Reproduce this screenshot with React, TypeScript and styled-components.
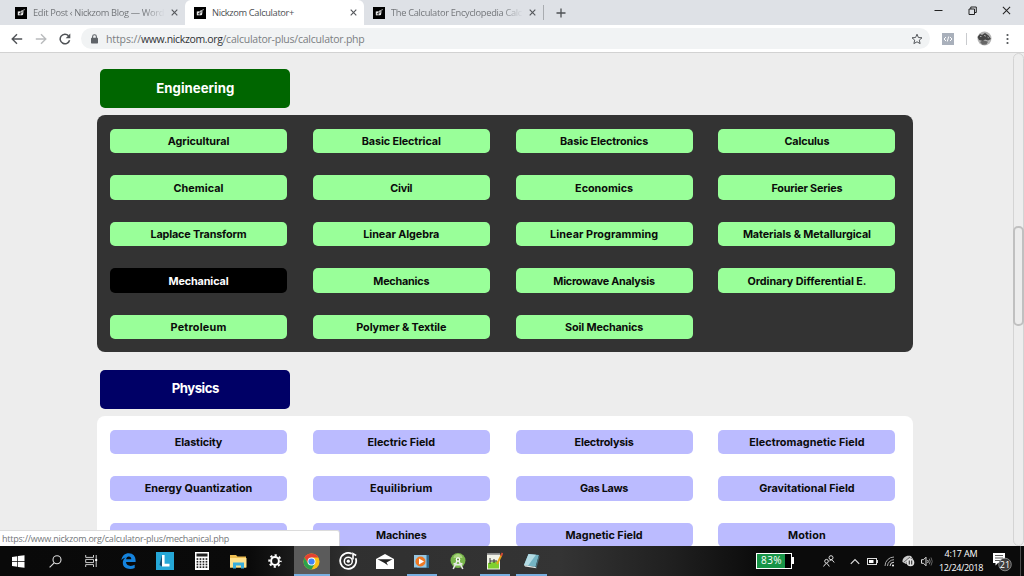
import React, { useLayoutEffect, useRef, useState } from "react";
import styled, { createGlobalStyle, css } from "styled-components";

const GlobalStyle = createGlobalStyle`
  * { box-sizing: border-box; }
  body { margin: 0; overflow: hidden; }
  svg { display: block; flex: none; }
`;

const ui = `"Open Sans", "Noto Sans", sans-serif`;
const geometric = `Inter, "Open Sans", sans-serif`;

/* Text */
const Line = styled.span`
  display: inline-block;
  white-space: nowrap;
`;

/** One line of text whose tracking is adjusted so that it fills a given width. */
function Tracked({ width, children }: { width: number; children: string }) {
  const ref = useRef<HTMLSpanElement>(null);
  const [spacing, setSpacing] = useState(0);
  useLayoutEffect(() => {
    const el = ref.current!;
    el.style.letterSpacing = "0px";
    const natural = el.getBoundingClientRect().width;
    const next = (width - natural) / children.length;
    el.style.letterSpacing = `${next}px`;
    setSpacing(next);
  }, [width, children]);
  return <Line ref={ref} style={{ letterSpacing: spacing }}>{children}</Line>;
}

/* Browser frame */
const Screen = styled.div`
  position: relative;
  width: 1024px;
  height: 576px;
  display: flex;
  flex-direction: column;
  overflow: hidden;
  font-family: ${ui};
  background: #ededed;
`;

const TabStrip = styled.div`
  height: 25px;
  flex: none;
  display: flex;
  padding-left: 6px;
  background: #dee1e6;
`;

const Tab = styled.div<{ $active?: boolean; $width: number }>`
  width: ${(p) => p.$width}px;
  height: 25px;
  padding: 0 7px 0 9px;
  display: flex;
  align-items: center;
  gap: 6px;
  font-size: 9.3px;
  color: ${(p) => (p.$active ? "#4c4f53" : "#73767a")};
  ${(p) =>
    p.$active &&
    css`
      background: #fff;
      border-radius: 6px 6px 0 0;
    `}
`;

const TabTitle = styled.div<{ $fade?: boolean }>`
  flex: 1;
  min-width: 0;
  white-space: nowrap;
  line-height: 16px;
  ${(p) => p.$fade && css`mask-image: linear-gradient(90deg, #000 84%, transparent 100%);`}
`;

const TabDivider = styled.div`
  width: 1px;
  height: 15px;
  margin: 5px 12px 0 0;
  background: #a9acb0;
`;

const NewTab = styled.div`
  display: flex;
  align-items: center;
`;

const WindowControls = styled.div`
  margin-left: auto;
  padding: 0 13px 4px 0;
  display: flex;
  align-items: center;
  gap: 25px;
`;

const Toolbar = styled.div`
  height: 28px;
  flex: none;
  display: flex;
  align-items: center;
  padding: 0 12px 0 11px;
  background: #fff;
  border-bottom: 1px solid #d2d2d2;
`;

const NavButtons = styled.div`
  width: 70px;
  display: flex;
  gap: 12px;
`;

const AddressBar = styled.div`
  width: 849px;
  height: 21px;
  padding: 0 7px 0 9px;
  display: flex;
  align-items: center;
  gap: 7px;
  border-radius: 11px;
  background: #f1f3f4;
  color: #7b7e82;
  font-size: 10.5px;
`;

const Address = styled.div`
  flex: 1;
  line-height: 18px;
`;

const Host = styled.span`
  color: #303235;
`;

const Extensions = styled.div`
  flex: 1;
  padding-left: 12px;
  display: flex;
  align-items: center;
`;

const CodeBadge = styled.div`
  width: 12px;
  height: 12px;
  background: #a9b0bb;
`;

const Separator = styled.div`
  width: 1px;
  height: 12px;
  margin: 0 10px 0 12px;
  background: #c9cbce;
`;

const MenuIcon = styled.svg`
  margin-left: auto;
`;

/* Page */
const Viewport = styled.div`
  flex: 1;
  min-height: 0;
  display: flex;
  overflow: hidden;
`;

const Page = styled.main`
  flex: 1;
  padding: 16px 0 0 97px;
  font-family: ${geometric};
`;

const Section = styled.section`
  margin-bottom: 17.5px;
`;

const Heading = styled.h2<{ $color: string }>`
  width: 190px;
  height: 39px;
  margin: 0 0 7.4px 3.3px;
  padding-bottom: 2px;
  display: flex;
  align-items: center;
  justify-content: center;
  border-radius: 5px;
  background: ${(p) => p.$color};
  color: #fff;
  font-size: 13.2px;
  font-weight: 700;
`;

const Panel = styled.div<{ $color: string }>`
  width: 816px;
  padding: 13.4px 13px 13px;
  display: grid;
  grid-template-columns: repeat(4, 177px);
  grid-auto-rows: 24.5px;
  column-gap: 25.8px;
  row-gap: 22px;
  border-radius: 8px;
  background: ${(p) => p.$color};
`;

const Topic = styled.div<{ $color: string; $selected?: boolean }>`
  display: flex;
  align-items: center;
  justify-content: center;
  padding-top: 1px;
  border-radius: 5px;
  background: ${(p) => (p.$selected ? "#000" : p.$color)};
  color: ${(p) => (p.$selected ? "#fff" : "#0b0b0b")};
  font-size: 10.8px;
  font-weight: 650;
`;

const ScrollTrack = styled.div`
  width: 11px;
  padding-top: 172px;
  border: 1px solid #d4d4d4;
  border-radius: 6px;
  background: #ededed;
`;

const ScrollThumb = styled.div`
  width: 11px;
  height: 100px;
  margin-left: -1px;
  border: 2px solid #c0c0c0;
  border-radius: 5px;
  background: #ececec;
`;

const StatusBubble = styled.div`
  position: absolute;
  left: 0;
  bottom: 30px;
  width: 340px;
  height: 16px;
  padding-left: 2px;
  border-top: 1px solid #dcdcdc;
  border-right: 1px solid #d2d2dc;
  border-radius: 0 3px 0 0;
  background: #fff;
  color: #74777a;
  font-size: 9px;
  line-height: 16px;
`;

/* Taskbar */
const Taskbar = styled.div`
  height: 30px;
  flex: none;
  display: flex;
  background: linear-gradient(90deg, #090909 0, #0a0a0a 250px, #303030 350px, #343434 560px, #202020 670px, #0b0b0b 760px);
`;

const Apps = styled.div`
  display: grid;
  grid-template-columns: repeat(15, 36.6px);
  padding-left: 1px;
`;

const AppButton = styled.div<{ $running?: boolean; $focused?: boolean }>`
  display: flex;
  align-items: center;
  justify-content: center;
  margin: 0 ${(p) => (p.$running ? 3 : 0)}px;
  padding-right: 1px;
  background: ${(p) => (p.$focused ? "#5b5b5b" : "transparent")};
  box-shadow: ${(p) => (p.$running || p.$focused ? "inset 0 -2px #78afe0" : "none")};
`;

const BatteryMeter = styled.div`
  position: relative;
  width: 36px;
  height: 16px;
  margin: 7px 31px 0 auto;
  padding-right: 5px;
  border: 1.5px solid #fff;
  background: linear-gradient(90deg, #179447 81%, #000 81%);
  color: #fff;
  font-size: 10px;
  line-height: 13px;
  text-align: center;
  &::after {
    content: "";
    position: absolute;
    right: -3px;
    top: 3px;
    width: 2px;
    height: 7px;
    background: #fff;
  }
`;

const Tray = styled.div`
  width: 110px;
  display: flex;
  align-items: center;
  justify-content: space-between;
  & > :first-child {
    margin-right: 9px;
  }
`;

const Clock = styled.div`
  width: 56px;
  padding-top: 1px;
  color: #fff;
  font-size: 9px;
  line-height: 13.5px;
  text-align: center;
`;

const Notifications = styled.div`
  width: 31px;
  display: flex;
  align-items: center;
  padding: 2px 0 0 3px;
`;

const ShowDesktop = styled.div`
  width: 4px;
  border-left: 1px solid #4c4c4c;
`;

/* Icons */
const SiteIcon = () => (
  <svg width="12" height="12" viewBox="0 0 12 12">
    <rect width="12" height="12" fill="#000" />
    <path d="M2.8 4.6 5.4 4.2 4.6 8.6 2.8 8.2Z M5.6 4.2 8.6 4.3 8 8 5.4 8.4Z" fill="#e8e8e8" />
    <path d="M6 4.2 9.800 2.600" stroke="#ddd" strokeWidth=".8" />
    <path d="M3.900 6.800 7.400 5.500" stroke="#222" strokeWidth=".8" />
  </svg>
);
const Cross = ({ size = 7, color = "#55585c", stroke = 1.3 }) => (
  <svg width={size} height={size} viewBox="0 0 8 8">
    <path d="M.8.8 7.2 7.2M7.2.8.8 7.2" stroke={color} strokeWidth={stroke} />
  </svg>
);
const Arrow = ({ flip }: { flip?: boolean }) => (
  <svg width="12" height="12" viewBox="0 0 12 12" transform={flip ? "scale(-1 1)" : undefined}>
    <path d="M11.2 6H1.6M6 1.200 1.200 6 6 10.800" fill="none" stroke={flip ? "#b9bbbd" : "#505357"} strokeWidth="1.4" />
  </svg>
);
const Reload = () => (
  <svg width="12" height="12" viewBox="0 0 12 12">
    <path d="M10.6 7.3A4.8 4.8 0 1 1 9.5 2.7" fill="none" stroke="#505357" strokeWidth="1.5" />
    <path d="M11.3.6V5.2H6.7Z" fill="#505357" />
  </svg>
);
const Lock = () => (
  <svg width="9" height="10" viewBox="0 0 9 10">
    <rect x="1" y="3.8" width="7" height="5.6" rx=".7" fill="#5f6368" />
    <path d="M2.6 4V2.7a1.9 1.9 0 0 1 3.8 0V4" fill="none" stroke="#5f6368" strokeWidth="1.1" />
  </svg>
);
const Star = () => (
  <svg width="12" height="12" viewBox="0 0 12 12">
    <path d="M6 1.2 7.4 4.5 11 4.8 8.3 7.1 9.1 10.6 6 8.8 2.9 10.6 3.7 7.1 1 4.8 4.6 4.5Z" fill="none" stroke="#55585c" />
  </svg>
);
const Avatar = () => (
  <svg width="15" height="15" viewBox="0 0 15 15">
    <circle cx="7.5" cy="7.5" r="7" fill="#b5b5b5" />
    <path d="M.5 6 3 3l2 1 3-2 3.500 2.500L14 8l-3 1.500-3-1-2 1.500-4-1Z" fill="#454545" />
    <path d="M3 5.500h1.500M7 4.400l2 .8M10.5 6l1.400 1" stroke="#a5a5a5" />
    <path d="M3 11c2-2 6-1.500 8-.2l-1.600 2.600-4 .4Z" fill="#666" />
  </svg>
);
const MenuDots = () => (
  <MenuIcon width="9" height="12" viewBox="0 0 9 12" fill="#505357">
    <circle cx="4.5" cy="2" r="1.1" /><circle cx="4.5" cy="6" r="1.1" /><circle cx="4.5" cy="10" r="1.1" />
  </MenuIcon>
);
const Windows = () => (
  <svg width="13" height="13" viewBox="0 0 13 13">
    <path d="M0 2 5.3 1.2V6H0ZM6 1.1 12.5.2V6H6ZM0 6.8H5.3V11.7L0 11ZM6 6.8H12.5V12.8L6 11.9Z" fill="#fff" />
  </svg>
);
const Search = () => (
  <svg width="13" height="13" viewBox="0 0 13 13" fill="none" stroke="#ddd" strokeWidth="1.1">
    <circle cx="8" cy="4.8" r="4" />
    <path d="M5.2 7.8.6 12.4" />
  </svg>
);
const TaskView = () => (
  <svg width="13" height="12" viewBox="0 0 13 12" fill="none" stroke="#ccc">
    <path d="M.7 0V2.4H8.5V0M.7 12V9.6H8.5V12M.7 4.4H8.5V7.6H.7ZM11.2 0V12" />
    <path d="M10.2 4h2v2h-2Z" fill="#fff" stroke="none" />
  </svg>
);
const Edge = () => (
  <svg width="15" height="16" viewBox="0 0 15 16">
    <path d="M.4 7.2C1 2.8 3.9.3 7.8.3c4.3 0 6.8 3.3 6.8 7v1.8H5c.1 2.7 2.3 3.8 4.7 3.8 1.5 0 2.9-.4 4-1.1v3.1c-1.3.7-2.9 1-4.6 1-4.4 0-7.3-2.2-7.3-6.2 0-2.1 1-4 2.9-5.2C2.8 5 1.4 5.8.4 7.2ZM5.1 6.3h5.2c0-1.7-.8-2.7-2.5-2.7-1.5 0-2.500 1.200-2.700 2.700Z" fill="#1583dd" />
  </svg>
);
const LApp = () => (
  <svg width="18" height="18" viewBox="0 0 18 18">
    <rect width="18" height="18" fill="#25a7d7" />
    <path d="M6 3V14.5L3.5 13Z" fill="#124b70" />
    <path d="M6 3H8.6V11.800H13.500V14.500H6Z" fill="#fff" />
  </svg>
);
const Calculator = () => (
  <svg width="14" height="18" viewBox="0 0 14 18">
    <rect width="14" height="18" fill="#fff" />
    <rect x="1.5" y="1.5" width="11" height="3" fill="#222" />
    {[6.2, 8.9, 11.6, 14.3].map((y) => [1.6, 4.6, 7.6, 10.6].map((x) => (
      <rect key={`${x}-${y}`} x={x} y={y} width="1.7" height="1.7" fill="#222" />
    )))}
  </svg>
);
const Folder = () => (
  <svg width="17" height="15" viewBox="0 0 17 15">
    <path d="M0 1H6L7.500 2.500H16V13.500H0Z" fill="#edbd51" />
    <path d="M0 4H16.500V13.500H0Z" fill="#ffe18c" />
    <path d="M3 14.500V8.500H14V14.500H11V11.500H6V14.500Z" fill="#39aedd" />
  </svg>
);
const Gear = () => (
  <svg width="14" height="14" viewBox="0 0 14 14" fill="none" stroke="#fff">
    <circle cx="7" cy="7" r="3.9" strokeWidth="2" />
    <circle cx="7" cy="7" r="5.7" strokeWidth="2" strokeDasharray="2.2 2.277" strokeDashoffset="1.1" />
  </svg>
);
const Chrome = () => (
  <svg width="17" height="17" viewBox="0 0 18 18">
    <circle cx="9" cy="9" r="8.5" fill="#fbc116" />
    <path d="M1.64 4.75A8.5 8.5 0 0 1 16.36 4.75H9L5.300 11.100Z" fill="#e34133" />
    <path d="M1.64 4.75A8.5 8.5 0 0 0 9 17.500L12.700 11.100H5.300Z" fill="#2ba24c" />
    <circle cx="9" cy="9" r="4.2" fill="#fff" />
    <circle cx="9" cy="9" r="3.3" fill="#4285f4" />
  </svg>
);
const Groove = () => (
  <svg width="19" height="18" viewBox="0 0 19 18" fill="none" stroke="#fff">
    <path d="M12.8 1.8A8 8 0 1 0 16.700 6.200" strokeWidth="1.8" />
    <circle cx="9.3" cy="9.2" r="4" strokeWidth="1.5" />
    <circle cx="9.3" cy="9.2" r="1.6" fill="#fff" stroke="none" />
    <path d="M14 7.500V1.600L17.200 3.500" strokeWidth="1.6" />
  </svg>
);
const Mail = () => (
  <svg width="18" height="15" viewBox="0 0 18 15">
    <path d="M0 5 9 0l9 5v10H0Z" fill="#fff" />
    <path d="M1.5 5.2H16.500L10.500 8.500 12 11.500 8.500 9.100Z" fill="#222" />
  </svg>
);
const Media = () => (
  <svg width="15" height="15" viewBox="0 0 15 15">
    <path d="M3 1H15V14H3Z" fill="#326a8c" />
    <path d="M0 1H12.500V13.500H0Z" fill="#98c9e4" />
    <circle cx="6.500" cy="7.500" r="5" fill="#ef7822" />
    <path d="M5 4.500 10 7.500 5 10.500Z" fill="#fff" />
  </svg>
);
const AndroidStudio = () => (
  <svg width="16" height="18" viewBox="0 0 16 18">
    <circle cx="8" cy="8.5" r="7.5" fill="#78b64b" />
    <path d="M3.500 6a4.500 4 0 0 1 9 0Z" fill="#a9d47f" />
    <path d="M8 7 3.200 17M8 7 12.800 17M3.500 11.500Q8 14 12.500 11.500" fill="none" stroke="#e8eae7" strokeWidth="1.6" />
    <circle cx="8" cy="7.5" r="2.2" fill="#fff" />
    <circle cx="8" cy="7.5" r="1" fill="#557a3d" />
  </svg>
);
const Editor = () => (
  <svg width="17" height="18" viewBox="0 0 17 18">
    <path d="M1 1H14V17.500H1Z" fill="#f2f3e8" />
    <path d="M1 1H14V2.800H1Z" fill="#8a8a8a" />
    <path d="M2 11 13 9V16.500H2Z" fill="#7fcf30" />
    <path d="M4 6V12M4 9H8M8 7V11M8 9H11" stroke="#333" />
    <path d="M15.500 3 11 12" stroke="#e5a41c" strokeWidth="1.800" />
    <path d="M16.500 1 15 4" stroke="#d54b36" strokeWidth="1.800" />
  </svg>
);
const Notepad = () => (
  <svg width="17" height="16" viewBox="0 0 17 16">
    <path d="M5.500 1 16 2 12.500 14 1 12Z" fill="#74b4c4" />
    <path d="M5.500 1 13 1.700 5 12.700 1 12Z" fill="#b4dce4" />
    <path d="M16 2 16.500 4 13.500 15 12.500 14Z" fill="#456b78" />
    <path d="M1 12 12.500 14 13.500 15.200 2 13.500Z" fill="#e7eceb" />
  </svg>
);
const People = () => (
  <svg width="12" height="12" viewBox="0 0 12 12" fill="none" stroke="#ddd">
    <circle cx="8" cy="2.7" r="2" />
    <path d="M6 6.500Q8.500 3 11.200 7.500" />
    <circle cx="3.5" cy="6.2" r="1.8" />
    <path d="M.6 11.500Q3.500 5.600 6.300 11.500" />
  </svg>
);
const Chevron = () => (
  <svg width="10" height="7" viewBox="0 0 10 7"><path d="M.8 5.800 5 1.500 9.200 5.800" fill="none" stroke="#ddd" strokeWidth="1.2" /></svg>
);
const SmallBattery = () => (
  <svg width="11" height="7" viewBox="0 0 11 7">
    <rect x=".5" y=".5" width="9" height="6" fill="none" stroke="#ddd" />
    <path d="M2 2H6.500V5H2Z" fill="#fff" /><path d="M10 2h1v3h-1Z" fill="#ddd" />
  </svg>
);
const Wifi = () => (
  <svg width="11" height="11" viewBox="0 0 11 11" fill="none" stroke="#aaa">
    <path d="M1 10A9 9 0 0 1 10 1" /><path d="M3.500 10A6.500 6.500 0 0 1 10 3.700" />
    <path d="M6 10A4 4 0 0 1 10 6.200" stroke="#ddd" /><circle cx="9" cy="9.500" r="1" fill="#fff" stroke="none" />
  </svg>
);
const Sync = () => (
  <svg width="13" height="12" viewBox="0 0 13 12">
    <path d="M.5 7C0 3 4-.5 9 1l2 3-7 5Z" fill="#ccc" />
    <path d="M2 7 8 2M4 8 10 3" stroke="#444" strokeWidth=".7" />
    <circle cx="8.500" cy="7.500" r="3.8" fill="#e2e2e2" />
    <path d="M7.300 5.500v4M9.700 5.500v4" stroke="#333" strokeWidth="1.1" />
  </svg>
);
const Speaker = () => (
  <svg width="12" height="11" viewBox="0 0 12 11" fill="none" stroke="#ddd">
    <path d="M.5 3.700H2.500L5 1.200V9.800L2.500 7.300H.5Z" />
    <path d="M6.700 4Q7.700 5.500 6.700 7" /><path d="M8.300 2.700Q10 5.500 8.300 8.300" stroke="#888" /><path d="M10 1.500Q12.500 5.500 10 9.500" stroke="#666" />
  </svg>
);
const Badge = () => (
  <svg width="20" height="20" viewBox="0 0 20 20">
    <path d="M1 1H13V11H6L3.500 13.500V11H1Z" fill="#fff" />
    <path d="M3 3.500H11M3 6H11M3 8.500H8" stroke="#333" strokeWidth=".8" />
    <circle cx="13" cy="12.500" r="6.3" fill="#3d3d3d" stroke="#989898" strokeWidth=".8" />
    <text x="13" y="15.700" textAnchor="middle" fill="#fff" fontSize="9" fontFamily={ui}>21</text>
  </svg>
);

type Entry = [label: string, width: number];

const engineering: Entry[] = [
  ["Agricultural", 61.5], ["Basic Electrical", 79], ["Basic Electronics", 88], ["Calculus", 45],
  ["Chemical", 50], ["Civil", 22], ["Economics", 58], ["Fourier Series", 71],
  ["Laplace Transform", 96], ["Linear Algebra", 76], ["Linear Programming", 108], ["Materials & Metallurgical", 128],
  ["Mechanical", 60], ["Mechanics", 56], ["Microwave Analysis", 101.5], ["Ordinary Differential E.", 119],
  ["Petroleum", 56], ["Polymer & Textile", 90], ["Soil Mechanics", 78],
];

const physics: Entry[] = [
  ["Elasticity", 47.5], ["Electric Field", 67.5], ["Electrolysis", 59], ["Electromagnetic Field", 115.5],
  ["Energy Quantization", 107.5], ["Equilibrium", 62.5], ["Gas Laws", 48], ["Gravitational Field", 95.5],
  ["", 0], ["Machines", 50.5], ["Magnetic Field", 77], ["Motion", 38],
];

interface TopicsProps { title: Entry; heading: string; panel: string; button: string; items: Entry[]; selected?: string }

const Topics = ({ title, heading, panel, button, items, selected }: TopicsProps) => (
  <Section>
    <Heading $color={heading}><Tracked width={title[1]}>{title[0]}</Tracked></Heading>
    <Panel $color={panel}>
      {items.map(([label, width], i) => (
        <Topic key={i} $color={button} $selected={!!label && label === selected}>
          {label && <Tracked width={width}>{label}</Tracked>}
        </Topic>
      ))}
    </Panel>
  </Section>
);

const apps: { icon: React.FC; running?: boolean; focused?: boolean }[] = [
  { icon: Windows }, { icon: Search }, { icon: TaskView }, { icon: Edge }, { icon: LApp }, { icon: Calculator },
  { icon: Folder }, { icon: Gear }, { icon: Chrome, focused: true }, { icon: Groove }, { icon: Mail },
  { icon: Media, running: true }, { icon: AndroidStudio }, { icon: Editor, running: true }, { icon: Notepad, running: true },
];

export default function App() {
  return (
    <Screen>
      <GlobalStyle />
      <TabStrip>
        <Tab $width={179}>
          <SiteIcon />
          <TabTitle $fade><Tracked width={131}>Edit Post ‹ Nickzom Blog — Word</Tracked></TabTitle>
          <Cross />
        </Tab>
        <Tab $active $width={179}>
          <SiteIcon />
          <TabTitle><Tracked width={82}>Nickzom Calculator+</Tracked></TabTitle>
          <Cross />
        </Tab>
        <Tab $width={179}>
          <SiteIcon />
          <TabTitle $fade><Tracked width={131}>The Calculator Encyclopedia Calc</Tracked></TabTitle>
          <Cross />
        </Tab>
        <TabDivider />
        <NewTab>
          <svg width="10" height="10" viewBox="0 0 10 10"><path d="M5 .5V9.500M.5 5H9.500" stroke="#4d5054" strokeWidth="1.3" /></svg>
        </NewTab>
        <WindowControls>
          <svg width="9" height="9" viewBox="0 0 9 9"><path d="M.5 4.500H8.500" stroke="#222" /></svg>
          <svg width="9" height="9" viewBox="0 0 9 9" fill="none" stroke="#222"><path d="M1 3H6.500V8.500H1ZM2.800 3V1H8.300V6.500H6.500" /></svg>
          <Cross size={9} color="#222" stroke={0.9} />
        </WindowControls>
      </TabStrip>
      <Toolbar>
        <NavButtons><Arrow /><Arrow flip /><Reload /></NavButtons>
        <AddressBar>
          <Lock />
          <Address>
            <Tracked width={35}>https://</Tracked>
            <Host><Tracked width={81.5}>www.nickzom.org</Tracked></Host>
            <Tracked width={142}>/calculator-plus/calculator.php</Tracked>
          </Address>
          <Star />
        </AddressBar>
        <Extensions>
          <CodeBadge>
            <svg width="12" height="12" viewBox="0 0 12 12" fill="none" stroke="#fff"><path d="M4 4 2 6 4 8M8 4 10 6 8 8M6.700 3.500 5.300 8.500" /></svg>
          </CodeBadge>
          <Separator />
          <Avatar />
          <MenuDots />
        </Extensions>
      </Toolbar>
      <Viewport>
        <Page>
          <Topics title={["Engineering", 78]} heading="#006600" panel="#333333" button="#99ff99" items={engineering} selected="Mechanical" />
          <Topics title={["Physics", 47]} heading="#000066" panel="#ffffff" button="#bbbbff" items={physics} />
        </Page>
        <ScrollTrack><ScrollThumb /></ScrollTrack>
      </Viewport>
      <StatusBubble><Tracked width={227}>https://www.nickzom.org/calculator-plus/mechanical.php</Tracked></StatusBubble>
      <Taskbar>
        <Apps>
          {apps.map(({ icon: Icon, running, focused }, i) => (
            <AppButton key={i} $running={running} $focused={focused}><Icon /></AppButton>
          ))}
        </Apps>
        <BatteryMeter><Tracked width={21}>83%</Tracked></BatteryMeter>
        <Tray><People /><Chevron /><SmallBattery /><Wifi /><Sync /><Speaker /></Tray>
        <Clock><Tracked width={33}>4:17 AM</Tracked><br /><Tracked width={44}>12/24/2018</Tracked></Clock>
        <Notifications><Badge /></Notifications>
        <ShowDesktop />
      </Taskbar>
    </Screen>
  );
}
